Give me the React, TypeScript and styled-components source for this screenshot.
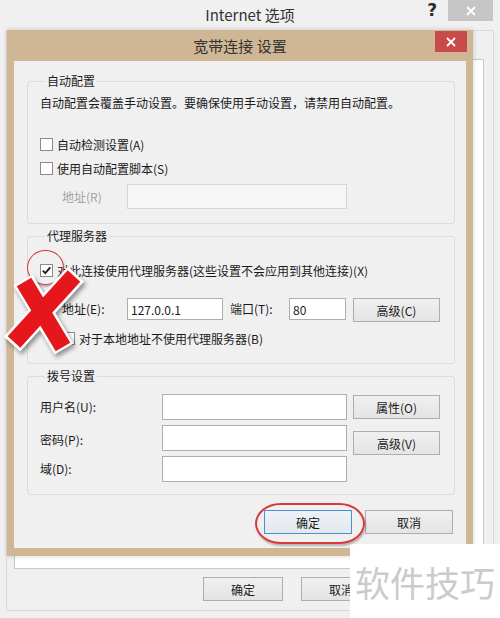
import React from "react";
import styled, { createGlobalStyle } from "styled-components";

const FONT = `"Noto Sans CJK SC", "Noto Sans", sans-serif`;

const GlobalStyle = createGlobalStyle`
  html, body { margin: 0; padding: 0; background: #f0f0f0; }
  body { font-family: ${FONT}; }
  * { box-sizing: border-box; }
`;

const Screen = styled.div`
  position: relative;
  width: 500px;
  height: 618px;
  overflow: hidden;
  background: #f0f0f0;
  font-family: ${FONT};
  font-size: 12px;
  color: #1a1a1a;
`;

/* ---------- outer window ---------- */
const TitleBar = styled.div<{ $h: number }>`
  height: ${(p) => p.$h}px;
  display: grid;
  grid-template-columns: 1fr auto 1fr;
  align-items: start;
`;

const TitleText = styled.div<{ $h: number }>`
  grid-column: 2;
  font-size: 15px;
  line-height: ${(p) => p.$h}px;
  color: #333;
  white-space: nowrap;
`;

const Controls = styled.div<{ $right: number; $top: number }>`
  display: flex;
  justify-content: flex-end;
  align-items: flex-start;
  padding-top: ${(p) => p.$top}px;
  margin-right: ${(p) => p.$right}px;
`;

const HelpMark = styled.span`
  font-family: "DejaVu Sans", sans-serif;
  font-weight: bold;
  font-size: 17px;
  line-height: 21px;
  margin-right: 11px;
  color: #2a2a2a;
`;

const CloseBox = styled.div<{ $variant: "grey" | "red" }>`
  width: ${(p) => (p.$variant === "grey" ? 45 : 32)}px;
  height: 21px;
  background: ${(p) => (p.$variant === "grey" ? "#c6c6c6" : "#c94a4b")};
  display: flex;
  align-items: center;
  justify-content: center;
`;

const OuterFrame = styled.div`
  margin: 0 6px;
  height: 581px;
  border: 1px solid #d9d9d9;
  padding: 28px 9px 0 7px;
  display: flex;
  flex-direction: column;
`;

const TabPanel = styled.div`
  height: 510px;
  background: #ffffff;
  border: 1px solid #c9c9c9;
`;

const ButtonRow = styled.div<{ $mt: number; $gap: number; $pr: number }>`
  display: flex;
  justify-content: flex-end;
  gap: ${(p) => p.$gap}px;
  margin-top: ${(p) => p.$mt}px;
  padding-right: ${(p) => p.$pr}px;
`;

const Button = styled.div<{ $w: number; $focused?: boolean; $mt?: number }>`
  width: ${(p) => p.$w}px;
  height: 24px;
  margin-top: ${(p) => p.$mt ?? 0}px;
  border: 1px solid ${(p) => (p.$focused ? "#4a8fcf" : "#adadad")};
  background: ${(p) =>
    p.$focused
      ? "linear-gradient(#eef2f6, #e2e8ee)"
      : "linear-gradient(#f0f0f0, #e4e4e4)"};
  font-size: 12px;
  color: #1a1a1a;
  display: flex;
  align-items: center;
  justify-content: center;
  white-space: nowrap;
`;

/* ---------- inner dialog ---------- */
const Dialog = styled.div`
  position: absolute;
  left: 7px;
  top: 30px;
  width: 466px;
  height: 526px;
  background: #cfb695;
  padding: 0 7px 8px;
  display: flex;
  flex-direction: column;
  box-shadow: 0 0 5px rgba(0, 0, 0, 0.18);
`;

const Client = styled.div`
  flex: 1;
  background: #f0f0f0;
  padding: 12px 11px 0 13px;
  display: flex;
  flex-direction: column;
`;

const Group = styled.fieldset<{ $mt: number; $pb: number }>`
  margin: ${(p) => p.$mt}px 0 0;
  padding: 0 12px ${(p) => p.$pb}px;
  border: 1px solid #dcdcdc;
  border-radius: 3px;
  min-width: 0;
`;

const Legend = styled.legend`
  margin-left: 5px;
  padding: 0 2px;
  font-size: 12px;
  line-height: 16px;
  color: #1a1a1a;
`;

const Text = styled.div<{ $mt: number }>`
  margin-top: ${(p) => p.$mt}px;
  line-height: 16px;
  white-space: nowrap;
`;

const CheckRow = styled.div<{ $mt: number; $pl?: number }>`
  display: flex;
  align-items: center;
  gap: 4px;
  height: 16px;
  margin-top: ${(p) => p.$mt}px;
  padding-left: ${(p) => p.$pl ?? 0}px;
  white-space: nowrap;
`;

const CheckBox = styled.div`
  width: 13px;
  height: 13px;
  border: 1px solid #8a8a8a;
  background: #ffffff;
  flex: none;
  display: flex;
  align-items: center;
  justify-content: center;
`;

const FieldRow = styled.div<{ $mt: number; $pl: number; $align?: string }>`
  display: flex;
  align-items: ${(p) => p.$align ?? "center"};
  margin-top: ${(p) => p.$mt}px;
  padding-left: ${(p) => p.$pl}px;
`;

const FieldLabel = styled.div<{ $w?: number; $disabled?: boolean; $pt?: number }>`
  width: ${(p) => (p.$w ? `${p.$w}px` : "auto")};
  flex: none;
  color: ${(p) => (p.$disabled ? "#a3a3a3" : "#1a1a1a")};
  line-height: 16px;
  padding-top: ${(p) => p.$pt ?? 0}px;
  white-space: nowrap;
`;

const TextBox = styled.div<{ $w?: number; $h: number; $disabled?: boolean; $mr?: number }>`
  width: ${(p) => (p.$w ? `${p.$w}px` : "auto")};
  height: ${(p) => p.$h}px;
  margin-right: ${(p) => p.$mr ?? 0}px;
  flex: none;
  border: 1px solid ${(p) => (p.$disabled ? "#d6d6d6" : "#abadb3")};
  background: ${(p) => (p.$disabled ? "#f6f6f6" : "#ffffff")};
  padding: 0 3px;
  display: flex;
  align-items: center;
  font-size: 12px;
  color: #1a1a1a;
`;

const DialGrid = styled.div`
  margin-top: 10px;
  display: grid;
  grid-template-columns: 116px 185px 87px;
  grid-auto-rows: 26px;
  column-gap: 6px;
  row-gap: 5px;
  align-items: center;
`;

const GridButton = styled(Button)`
  align-self: start;
`;

/* ---------- overlays ---------- */
const Watermark = styled.div`
  position: absolute;
  left: 350px;
  top: 544px;
  width: 150px;
  height: 74px;
  background: #ffffff;
  display: flex;
  align-items: center;
  padding-left: 5px;
  font-size: 35px;
  color: #cbcbcb;
  white-space: nowrap;
`;

const RingMark = styled.div<{ $l: number; $t: number; $w: number; $h: number; $bw: number; $r: string }>`
  position: absolute;
  left: ${(p) => p.$l}px;
  top: ${(p) => p.$t}px;
  width: ${(p) => p.$w}px;
  height: ${(p) => p.$h}px;
  border: ${(p) => p.$bw}px solid #d63a3c;
  border-radius: ${(p) => p.$r};
  box-shadow: 1px 2px 2px rgba(0, 0, 0, 0.25);
  pointer-events: none;
`;

const CrossMark = styled.svg`
  position: absolute;
  left: 4px;
  top: 266px;
  width: 84px;
  height: 92px;
  overflow: visible;
  filter: drop-shadow(2px 3px 2px rgba(0, 0, 0, 0.4));
`;

const CloseGlyph = () => (
  <svg width="10" height="10" viewBox="0 0 10 10">
    <path d="M1 1L9 9M9 1L1 9" stroke="#fff" strokeWidth="1.8" />
  </svg>
);

const CheckGlyph = () => (
  <svg width="11" height="11" viewBox="0 0 11 11">
    <path d="M1.8 5.6L4.3 8.2L9.3 2.3" fill="none" stroke="#1e1e1e" strokeWidth="1.9" />
  </svg>
);

export default function App() {
  return (
    <>
      <GlobalStyle />
      <Screen>
        <TitleBar $h={30}>
          <TitleText $h={30}>Internet 选项</TitleText>
          <Controls $right={7} $top={0}>
            <HelpMark>?</HelpMark>
            <CloseBox $variant="grey">
              <CloseGlyph />
            </CloseBox>
          </Controls>
        </TitleBar>
        <OuterFrame>
          <TabPanel />
          <ButtonRow $mt={8} $gap={18} $pr={103}>
            <Button $w={80}>确定</Button>
            <Button $w={80}>取消</Button>
          </ButtonRow>
        </OuterFrame>

        <Dialog>
          <TitleBar $h={31}>
            <TitleText $h={31}>宽带连接 设置</TitleText>
            <Controls $right={-1} $top={1}>
              <CloseBox $variant="red">
                <CloseGlyph />
              </CloseBox>
            </Controls>
          </TitleBar>
          <Client>
            <Group $mt={0} $pb={14}>
              <Legend>自动配置</Legend>
              <Text $mt={6}>自动配置会覆盖手动设置。要确保使用手动设置，请禁用自动配置。</Text>
              <CheckRow $mt={25}>
                <CheckBox />
                <span>自动检测设置(A)</span>
              </CheckRow>
              <CheckRow $mt={8}>
                <CheckBox />
                <span>使用自动配置脚本(S)</span>
              </CheckRow>
              <FieldRow $mt={8} $pl={22}>
                <FieldLabel $w={65} $disabled>
                  地址(R)
                </FieldLabel>
                <TextBox $w={220} $h={25} $disabled />
              </FieldRow>
            </Group>

            <Group $mt={4} $pb={17}>
              <Legend>代理服务器</Legend>
              <CheckRow $mt={18}>
                <CheckBox>
                  <CheckGlyph />
                </CheckBox>
                <span>对此连接使用代理服务器(这些设置不会应用到其他连接)(X)</span>
              </CheckRow>
              <FieldRow $mt={20} $pl={22} $align="flex-start">
                <FieldLabel $w={65} $pt={3}>
                  地址(E):
                </FieldLabel>
                <TextBox $w={96} $h={22} $mr={7}>
                  127.0.0.1
                </TextBox>
                <FieldLabel $w={59} $pt={3}>
                  端口(T):
                </FieldLabel>
                <TextBox $w={57} $h={22} $mr={7}>
                  80
                </TextBox>
                <Button $w={87}>高级(C)</Button>
              </FieldRow>
              <CheckRow $mt={8} $pl={22}>
                <CheckBox />
                <span>对于本地地址不使用代理服务器(B)</span>
              </CheckRow>
            </Group>

            <Group $mt={4} $pb={12}>
              <Legend>拨号设置</Legend>
              <DialGrid>
                <FieldLabel>用户名(U):</FieldLabel>
                <TextBox $h={26} />
                <GridButton $w={87} $mt={1}>
                  属性(O)
                </GridButton>
                <FieldLabel $pt={3}>密码(P):</FieldLabel>
                <TextBox $h={26} />
                <GridButton $w={87} $mt={6}>
                  高级(V)
                </GridButton>
                <FieldLabel>域(D):</FieldLabel>
                <TextBox $h={26} />
              </DialGrid>
            </Group>

            <ButtonRow $mt={15} $gap={13} $pr={2}>
              <Button $w={88} $focused>
                确定
              </Button>
              <Button $w={88}>取消</Button>
            </ButtonRow>
          </Client>
        </Dialog>

        <Watermark>软件技巧</Watermark>

        <RingMark $l={27} $t={250} $w={37} $h={35} $bw={1.5} $r="50%" />
        <RingMark $l={255} $t={503} $w={110} $h={41} $bw={2} $r="26px / 21px" />

        <CrossMark viewBox="0 0 84 92">
          <path d="M19 14L60 83" stroke="#ffffff" strokeWidth="22" />
          <path d="M72 8L8 78" stroke="#ffffff" strokeWidth="22" />
          <path d="M20 16L59 81" stroke="#e5171c" strokeWidth="17" />
          <path d="M70 10L10 76" stroke="#e5171c" strokeWidth="17" />
        </CrossMark>
      </Screen>
    </>
  );
}
